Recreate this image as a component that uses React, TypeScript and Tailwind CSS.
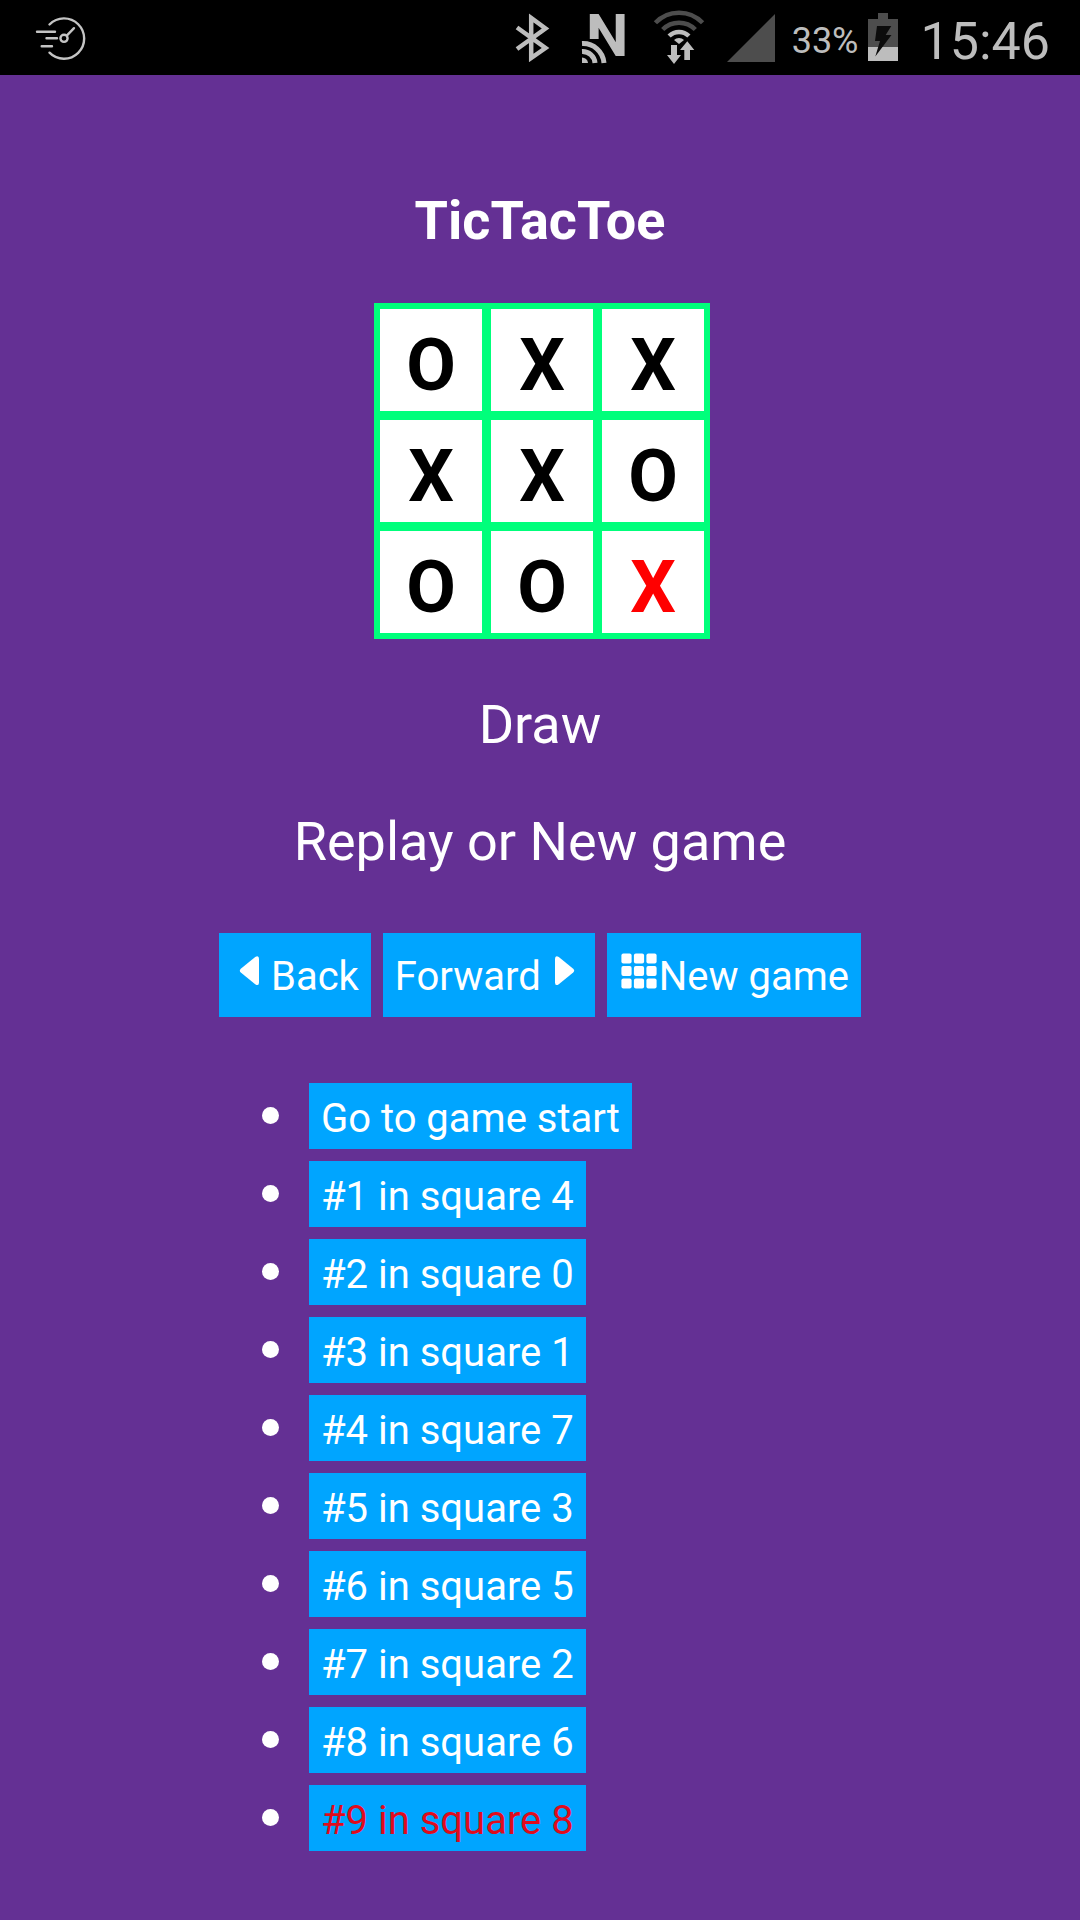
import React, { useState } from "react";

const LINES = [
  [0, 1, 2],
  [3, 4, 5],
  [6, 7, 8],
  [0, 3, 6],
  [1, 4, 7],
  [2, 5, 8],
  [0, 4, 8],
  [2, 4, 6],
];

const FIRST_GAME = [4, 0, 1, 7, 3, 5, 2, 6, 8];

function SpeedIcon() {
  return (
    <svg className="h-[75px] w-[56px]" viewBox="32 0 56 75" fill="none" stroke="#c4c4c4" strokeWidth="2.4" strokeLinecap="round" aria-hidden="true">
      <path d="M49.5 24.5A20.2 20.2 0 1 1 49.5 52.7" />
      <circle cx="64" cy="38.3" r="3.6" />
      <path d="M67 35.3L74 28.2M37 31.7H55M46.5 38.3H57M41.7 46.3H52" />
    </svg>
  );
}

function BluetoothIcon() {
  return (
    <svg className="h-[75px] w-[48px]" viewBox="512 0 48 75" aria-hidden="true">
      <path d="M517 27.5L545.5 48L531.2 58V18L545.5 28.5L517 49" fill="none" stroke="#bdbdbd" strokeWidth="4.5" strokeMiterlimit="10" />
    </svg>
  );
}

function NfcIcon() {
  return (
    <svg className="h-[75px] w-[60px]" viewBox="576 0 60 75" aria-hidden="true">
      <text x="586" y="56" fontSize="60" fontWeight="700" fill="#bdbdbd">
        N
      </text>
      <rect x="581" y="39" width="22" height="24" fill="#000" />
      <g fill="none" stroke="#bdbdbd" strokeWidth="5">
        <path d="M582 43.500A21 21 0 0 1 604 63" />
        <path d="M582 51.500A12.500 12.500 0 0 1 595 63" />
      </g>
      <path d="M582 57.500A6 6 0 0 1 588 63H582Z" fill="#bdbdbd" />
    </svg>
  );
}

function WifiIcon() {
  return (
    <svg className="h-[75px] w-[58px]" viewBox="652 0 58 75" aria-hidden="true">
      <g fill="none" strokeWidth="4.5">
        <path d="M655.4 22.8A32.5 32.5 0 0 1 702.6 22.8" stroke="#4d4d4d" />
        <path d="M662.7 29.5A23 23 0 0 1 695.3 29.5" stroke="#4d4d4d" />
        <path d="M669.1 36A14 14 0 0 1 688.9 36" stroke="#bdbdbd" />
      </g>
      <path d="M674 40A7 7 0 0 1 684 40L679 44Z" fill="#bdbdbd" />
      <path d="M671 45H677V55H681L674 64L667 55H671Z" fill="#bdbdbd" />
      <path d="M687.3 41.3L694.3 50H690V60H684.3V50H680Z" fill="#bdbdbd" />
    </svg>
  );
}

function SignalIcon() {
  return (
    <svg className="h-[75px] w-[50px]" viewBox="726 0 50 75" aria-hidden="true">
      <path d="M727 62H775V14Z" fill="#4d4d4d" />
    </svg>
  );
}

function BatteryIcon() {
  return (
    <svg className="h-[75px] w-[34px]" viewBox="867 0 34 75" aria-hidden="true">
      <path d="M878 13H888V19H898V47H868V19H878Z" fill="#4d4d4d" />
      <path d="M868 47H898V61H868Z" fill="#bdbdbd" />
      <path d="M877 26H891.3L885.7 35H891.5L875.3 56.5L880 41H875Z" fill="#0c0c0c" />
    </svg>
  );
}

function StatusBar() {
  return (
    <header className="flex h-[75px] justify-between bg-black pl-8 pr-[30px] text-[#bdbdbd]">
      <SpeedIcon />
      <div className="flex gap-4">
        <BluetoothIcon />
        <NfcIcon />
        <WifiIcon />
        <SignalIcon />
        <div className="flex gap-2">
          <span className="pt-[21px] text-4xl leading-10">33%</span>
          <BatteryIcon />
        </div>
        <span className="ml-1 pt-2.5 text-[52px] leading-16">15:46</span>
      </div>
    </header>
  );
}

function LeftArrow() {
  return (
    <svg className="h-9 w-10" viewBox="0 0 40 36" fill="currentColor" aria-hidden="true">
      <path d="M9.8 15.8L24.2 4Q28 1.8 28 6V29.5Q28 33.5 24.2 31.2L9.8 19.5Q7.8 17.6 9.8 15.8Z" />
    </svg>
  );
}

function RightArrow() {
  return (
    <svg className="ml-0.5 h-9 w-10" viewBox="0 0 40 36" fill="currentColor" aria-hidden="true">
      <path d="M30.2 15.8L15.8 4Q12 1.8 12 6V29.5Q12 33.5 15.8 31.2L30.2 19.5Q32.2 17.6 30.2 15.8Z" />
    </svg>
  );
}

function GridIcon() {
  const stops = [0.4, 12.9, 25.4];
  return (
    <svg className="h-9 w-10" viewBox="0 0 40 36" fill="currentColor" aria-hidden="true">
      {stops.map((y) => stops.map((x) => <rect key={`${x}-${y}`} x={x + 2} y={y} width="10.2" height="10.2" rx="2" />))}
    </svg>
  );
}

function ControlButton({ onClick, children }: { onClick: () => void; children: React.ReactNode }) {
  return (
    <button type="button" onClick={onClick} className="flex cursor-pointer items-start bg-[#00a5ff] px-3 pt-5 pb-4 text-[40px] leading-12 text-white">
      {children}
    </button>
  );
}

export default function App() {
  const [moves, setMoves] = useState<number[]>(FIRST_GAME);
  const [step, setStep] = useState(FIRST_GAME.length);

  const played = moves.slice(0, step);
  const marks: (string | null)[] = Array(9).fill(null);
  played.forEach((square, i) => {
    marks[square] = i % 2 === 0 ? "X" : "O";
  });
  const win = LINES.find(([a, b, c]) => marks[a] && marks[a] === marks[b] && marks[a] === marks[c]);
  const status = win ? `Winner: ${marks[win[0]]}` : step === 9 ? "Draw" : `Next player: ${step % 2 === 0 ? "X" : "O"}`;
  const last = played[played.length - 1];

  const play = (square: number) => {
    if (marks[square] || win) return;
    setMoves([...played, square]);
    setStep(step + 1);
  };

  return (
    <div className="min-h-screen bg-[#643094] font-['Roboto',sans-serif] text-white">
      <StatusBar />
      <main className="flex flex-col items-center pt-[114px] pb-14 text-[54px] leading-16">
        <h1 className="font-bold">TicTacToe</h1>
        <div className="mt-[50px] pl-1">
          <div className="grid grid-cols-3 gap-[9px] bg-[#00ff7b] p-1.5">
            {marks.map((mark, square) => (
              <button
                key={square}
                type="button"
                aria-label={`Square ${square}${mark ? `: ${mark}` : ""}`}
                onClick={() => play(square)}
                className={`flex size-[102px] items-center justify-center bg-white pt-3 text-7xl font-bold ${square === last ? "text-[#ff0000]" : "text-black"}`}
              >
                {mark}
              </button>
            ))}
          </div>
        </div>
        <p className="mt-[54px]">{status}</p>
        <p className="mt-[53px]">Replay or New game</p>
        <div className="mt-[59px]">
          <div className="flex gap-3">
            <ControlButton onClick={() => setStep(Math.max(0, step - 1))}>
              <LeftArrow />
              Back
            </ControlButton>
            <ControlButton onClick={() => setStep(Math.min(moves.length, step + 1))}>
              Forward
              <RightArrow />
            </ControlButton>
            <ControlButton
              onClick={() => {
                setMoves([]);
                setStep(0);
              }}
            >
              <GridIcon />
              New game
            </ControlButton>
          </div>
          <ul className="mt-[66px] list-disc pl-[83px] leading-none">
            {[null, ...moves].map((square, i) => (
              <li key={i} className="mb-3 pl-[7px]">
                <button
                  type="button"
                  onClick={() => setStep(i)}
                  className={`block cursor-pointer bg-[#00a5ff] px-3 pt-3 pb-1.5 text-[40px] leading-12 ${i > 0 && i === step ? "text-[#e00b1c]" : "text-white"}`}
                >
                  {square === null ? "Go to game start" : `#${i} in square ${square}`}
                </button>
              </li>
            ))}
          </ul>
        </div>
      </main>
    </div>
  );
}
